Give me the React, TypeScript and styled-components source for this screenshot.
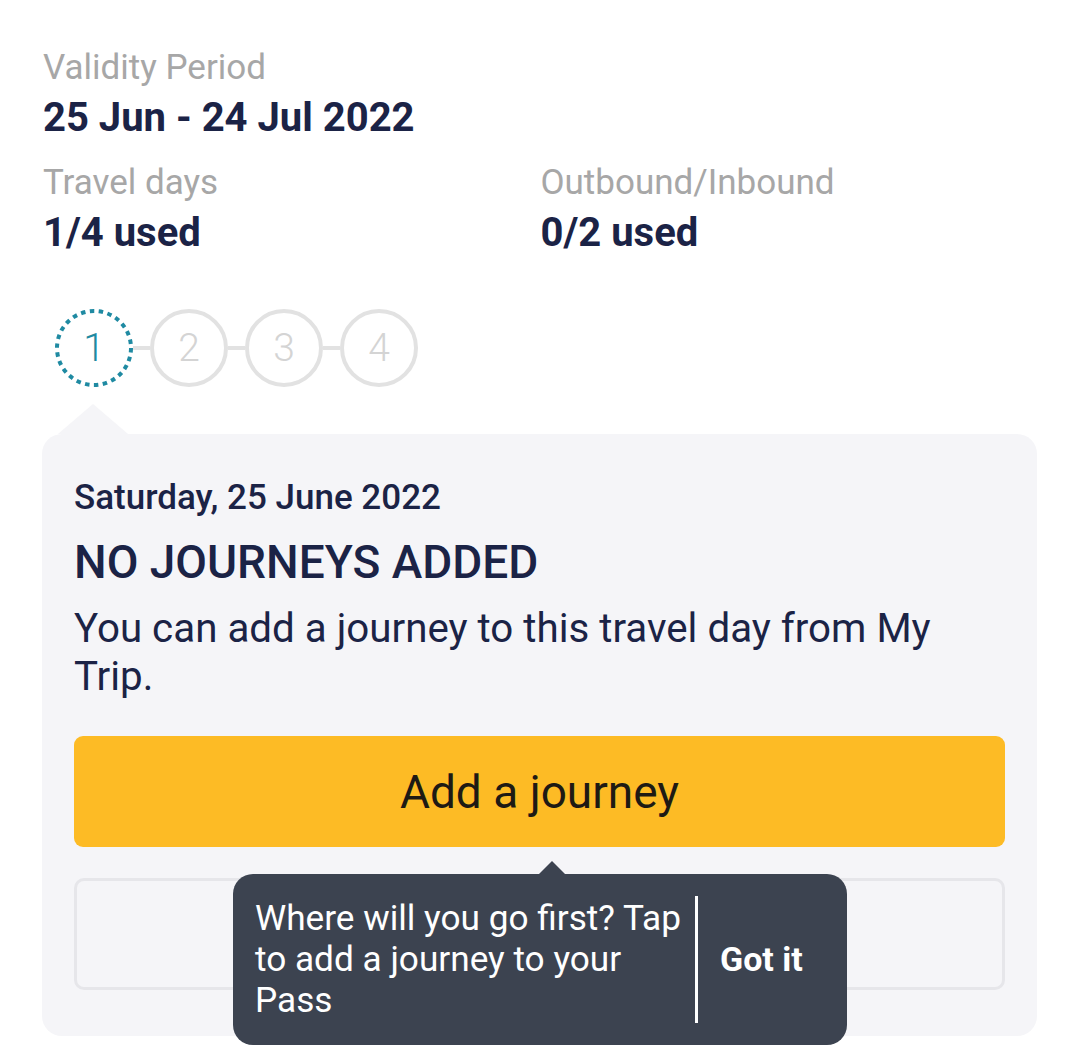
import React from 'react';
import styled, { createGlobalStyle } from 'styled-components';

const NAVY = '#1b2346';
const MUTED = '#a7a7a7';
const TEAL = '#1f8aa2';
const RING = '#e2e2e2';
const CARD_BG = '#f5f5f8';

const GlobalStyle = createGlobalStyle`
  html, body {
    margin: 0;
    padding: 0;
    background: #ffffff;
  }
  body {
    font-family: Roboto, "Noto Sans", "Liberation Sans", sans-serif;
    -webkit-font-smoothing: antialiased;
  }
  * {
    box-sizing: border-box;
  }
`;

const steps = [1, 2, 3, 4];

export default function App() {
  return (
    <>
      <GlobalStyle />
      <Page>
        <InfoItem>
          <Label>Validity Period</Label>
          <Value>25 Jun - 24 Jul 2022</Value>
        </InfoItem>
        <InfoGrid>
          <InfoItem>
            <Label>Travel days</Label>
            <Value>1/4 used</Value>
          </InfoItem>
          <InfoItem>
            <Label>Outbound/Inbound</Label>
            <Value>0/2 used</Value>
          </InfoItem>
        </InfoGrid>

        <Steps>
          {steps.map((n, i) => (
            <React.Fragment key={n}>
              {i > 0 && <Connector />}
              <StepCircle active={n === 1}>
                {n === 1 && (
                  <DottedRing viewBox="0 0 78 78">
                    <circle
                      cx="39"
                      cy="39"
                      r="37"
                      fill="none"
                      stroke={TEAL}
                      strokeWidth="4"
                      strokeDasharray="4.5 4.44"
                    />
                  </DottedRing>
                )}
                {n}
              </StepCircle>
            </React.Fragment>
          ))}
        </Steps>

        <Card>
          <CardDate>Saturday, 25 June 2022</CardDate>
          <CardTitle>NO JOURNEYS ADDED</CardTitle>
          <CardText>You can add a journey to this travel day from My Trip.</CardText>
          <PrimaryButton>Add a journey</PrimaryButton>
          <SecondaryButton />

          <Tooltip>
            <TooltipText>Where will you go first? Tap to add a journey to your Pass</TooltipText>
            <TooltipDivider />
            <TooltipAction>Got it</TooltipAction>
          </Tooltip>
        </Card>
      </Page>
    </>
  );
}

const Page = styled.div`
  width: 1080px;
  min-height: 1059px;
  padding: 48px 43px 23px 42px;
`;

const InfoGrid = styled.div`
  display: grid;
  grid-template-columns: 1fr 1fr;
  margin-top: 21px;
`;

const InfoItem = styled.div`
  display: flex;
  flex-direction: column;
  gap: 6px;
  padding-left: 1px;
`;

const Label = styled.div`
  font-size: 35px;
  line-height: 40px;
  color: ${MUTED};
`;

const Value = styled.div`
  font-size: 40px;
  line-height: 48px;
  font-weight: 700;
  color: ${NAVY};
`;

const Steps = styled.div`
  display: flex;
  align-items: center;
  margin-top: 52px;
  padding-left: 13px;
`;

const StepCircle = styled.div<{ active?: boolean }>`
  position: relative;
  width: 78px;
  height: 78px;
  border-radius: 50%;
  border: ${p => (p.active ? 'none' : `4px solid ${RING}`)};
  display: flex;
  align-items: center;
  justify-content: center;
  font-size: 39px;
  font-weight: 300;
  color: ${p => (p.active ? TEAL : '#d4d4d4')};
`;

const DottedRing = styled.svg`
  position: absolute;
  inset: 0;
  width: 78px;
  height: 78px;
`;

const Connector = styled.div`
  width: 17px;
  height: 4px;
  background: ${RING};
`;

const Card = styled.div`
  position: relative;
  margin-top: 47px;
  background: ${CARD_BG};
  border-radius: 20px;
  padding: 44px 32px 46px 32px;
  display: flex;
  flex-direction: column;

  &::before {
    content: '';
    position: absolute;
    top: -30px;
    left: 16px;
    border-left: 35px solid transparent;
    border-right: 35px solid transparent;
    border-bottom: 30px solid ${CARD_BG};
  }
`;

const CardDate = styled.div`
  font-size: 35px;
  line-height: 40px;
  font-weight: 500;
  color: ${NAVY};
`;

const CardTitle = styled.div`
  margin-top: 18px;
  font-size: 46px;
  line-height: 52px;
  font-weight: 500;
  color: ${NAVY};
`;

const CardText = styled.div`
  margin-top: 17px;
  font-size: 40.3px;
  line-height: 48px;
  color: ${NAVY};
`;

const PrimaryButton = styled.button`
  margin-top: 35px;
  height: 111px;
  border: none;
  border-radius: 9px;
  background: #fdbb25;
  font-family: inherit;
  font-size: 46px;
  color: #1e1a14;
  cursor: pointer;
`;

const SecondaryButton = styled.button`
  margin-top: 31px;
  height: 112px;
  border: 3px solid #e6e6ea;
  border-radius: 10px;
  background: ${CARD_BG};
  cursor: pointer;
`;

const Tooltip = styled.div`
  position: absolute;
  top: 440px;
  left: 191px;
  width: 614px;
  height: 171px;
  background: #3c4350;
  border-radius: 20px;
  display: flex;
  align-items: center;
  padding: 0 42px 0 22px;
  color: #ffffff;

  &::before {
    content: '';
    position: absolute;
    top: -13px;
    left: 305px;
    border-left: 14px solid transparent;
    border-right: 14px solid transparent;
    border-bottom: 14px solid #3c4350;
  }
`;

const TooltipText = styled.div`
  width: 434px;
  font-size: 35.2px;
  line-height: 41px;
`;

const TooltipDivider = styled.div`
  align-self: center;
  width: 3px;
  height: 127px;
  background: #ffffff;
  margin: 0 22px 0 6px;
`;

const TooltipAction = styled.div`
  font-size: 34px;
  font-weight: 700;
  line-height: 41px;
`;
